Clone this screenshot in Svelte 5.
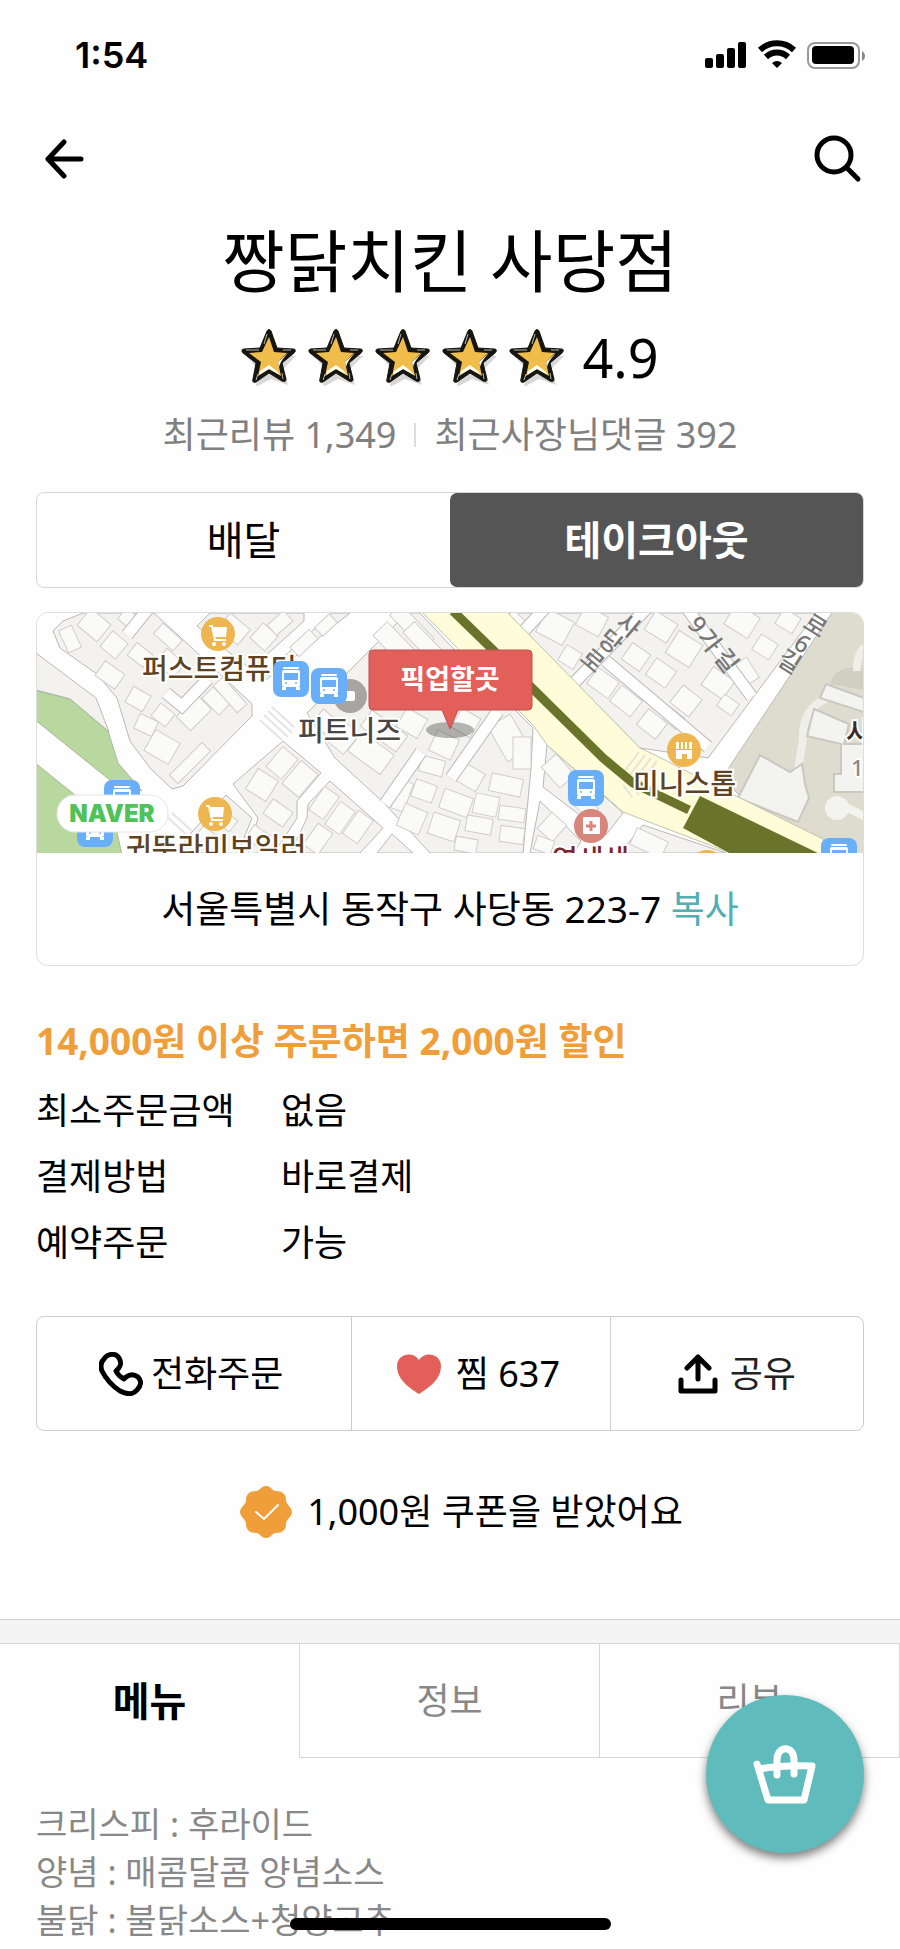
<script lang="ts">
  interface Place {
    x: number;
    y: number;
  }

  const info = [
    { label: '최소주문금액', value: '없음' },
    { label: '결제방법', value: '바로결제' },
    { label: '예약주문', value: '가능' },
  ];

  const tabs = ['메뉴', '정보', '리뷰'];
  const notes = ['크리스피 : 후라이드', '양념 : 매콤달콤 양념소스', '불닭 : 불닭소스+청양고추'];

  let orderType = $state('takeout');
  let activeTab = $state('메뉴');

  const blocks = [
    '0,40 60,85 73,119 34,86 0,77',
    '47,0 27,8 17,18 24,35 61,61 81,85 94,128 114,155 136,176 147,173 216,103 216,91 181,58 119,1 117,0',
    '161,13 174,0 268,0 268,8 215,56 200,45',
    '314,0 296,0 232,58 226,70',
    '371,0 384,0 412,30 497,115 495,155 487,240 394,240 349,191 299,145 271,100',
    '197,171 247,128 285,160 261,188 261,205 250,222 238,240 212,240 222,205',
    '294,168 347,215 324,240 254,240 271,205 272,191',
    '356,221 377,240 341,240',
    '155,220 190,182 216,205 202,240 140,240',
    '471,0 780,0 672,145 604,135',
    '511,132 587,200 570,222 545,203 507,174',
    '504,188 545,228 538,240 494,240',
    '607,212 690,240 584,240',
  ];

  const alleys = [
    '112,-4 91,22',
    '130,80 146,93 172,66',
    '349,191 385,139',
    '415,165 462,98',
    '612,-6 536,72',
    '570,48 672,134',
    '650,-6 716,84',
    '510,-6 486,20',
  ];

  // x, y, width, height, rotation
  const buildings = [
    [58, 12, 26, 22, 40], [78, 32, 20, 20, 40], [34, 26, 14, 24, -25], [93, 6, 18, 14, 40],
    [74, 62, 24, 18, 35], [104, 42, 20, 16, 38], [132, 24, 26, 14, 42], [134, 50, 24, 18, 42],
    [102, 86, 20, 18, 30], [127, 102, 18, 16, 38], [158, 100, 30, 20, -45], [180, 88, 24, 16, 45],
    [194, 82, 36, 13, 48], [110, 112, 20, 16, 25], [126, 134, 28, 24, 30], [154, 150, 46, 12, -45],
    [198, 16, 26, 20, 40], [228, 24, 20, 20, 42], [244, 10, 22, 14, -42], [268, 30, 26, 13, -43],
    [290, 12, 20, 12, -43], [246, 150, 26, 20, -50], [264, 166, 30, 22, -50], [226, 172, 24, 24, 32],
    [242, 200, 24, 18, 35], [222, 224, 20, 16, 35], [288, 190, 28, 18, -55], [304, 205, 28, 18, -55],
    [322, 214, 28, 18, -55], [282, 226, 26, 18, -55], [188, 206, 24, 14, 38], [172, 225, 22, 14, 38],
    [358, 30, 40, 20, 46], [376, 14, 48, 16, 46], [390, 32, 50, 16, 46], [290, 110, 22, 18, 40],
    [308, 125, 20, 26, 40], [335, 140, 40, 24, 36], [348, 118, 44, 20, 36], [376, 110, 24, 22, 30],
    [408, 132, 24, 22, 25], [430, 110, 22, 22, 30], [396, 153, 24, 16, 15], [434, 164, 24, 20, 30],
    [470, 172, 32, 18, 12], [388, 178, 22, 18, 20], [420, 190, 30, 20, 20], [450, 192, 24, 20, 12],
    [476, 201, 26, 14, 8], [364, 182, 18, 30, 20], [376, 206, 24, 24, 24], [408, 214, 28, 22, 18],
    [443, 212, 26, 16, 10], [476, 222, 24, 16, 8], [430, 232, 22, 14, 10], [473, 125, 26, 40, -30],
    [486, 140, 18, 32, 0], [480, 6, 16, 10, 45], [519, 14, 30, 26, 28], [556, 8, 26, 22, 28],
    [534, 44, 18, 18, 32], [567, 70, 26, 20, 35], [590, 88, 26, 20, 38], [616, 111, 24, 20, 38],
    [638, 106, 16, 14, 38], [650, 88, 24, 22, 38], [625, 60, 24, 20, 35], [600, 44, 22, 20, 35],
    [648, 36, 28, 26, 32], [682, 70, 26, 22, 35], [625, 14, 26, 22, 32], [706, 8, 28, 24, 32],
    [729, 34, 20, 18, 32], [711, 58, 14, 24, -32], [692, 92, 18, 14, 35], [752, 8, 20, 18, 32],
    [522, 158, 20, 28, -42], [548, 192, 26, 14, 42], [516, 214, 20, 22, 42], [508, 232, 18, 14, 20],
    [613, 230, 34, 18, 25],
  ];

  const roadLabels = [
    { t: '사', x: 592, y: 13, r: 40 }, { t: '당', x: 574, y: 29, r: 40 }, { t: '로', x: 556, y: 48, r: 40 },
    { t: '9', x: 661, y: 12, r: 52 }, { t: '가', x: 673, y: 28, r: 52 }, { t: '길', x: 690, y: 48, r: 52 },
    { t: '로', x: 779, y: 13, r: 32 }, { t: '6', x: 766, y: 31, r: 32 }, { t: '길', x: 753, y: 49, r: 32 },
  ];

  const buses: Place[] = [
    { x: 255, y: 66 }, { x: 293, y: 73 }, { x: 86, y: 185 },
    { x: 59, y: 216 }, { x: 550, y: 175 }, { x: 803, y: 243 },
  ];
  const carts: Place[] = [{ x: 182, y: 21 }, { x: 179, y: 201 }];
</script>

<svelte:head><title>짱닭치킨 사당점</title></svelte:head>

{#snippet star()}
  <svg class="star" viewBox="0 0 56 58" aria-hidden="true">
    <path d="M30 9l8 17 17 2-13 13 5 16-17-6-15 8 2-18L5 28l18-2z" fill="#000" opacity=".15" />
    <path d="M26 3c1-2 3-2 4 0l6 17 16 1c3 0 3 2 1 4L41 35l4 16c0 3-2 3-4 2l-13-8-13 9c-2 1-4 0-3-3l3-16L2 25c-2-2-1-4 1-4l16-1z" fill="#17150f" stroke="#17150f" />
    <path d="M28 9l5 15 13 1-9 9 3 14-12-7-11 7 3-14L8 25l13-1z" fill="#f0bd4a" />
    <path d="M47 25L37 34l1 5c2-7 5-9 9-14zM28 41l-10 6 1-4 9-6 8 6 3 4z" fill="#fffdf4" />
    <path d="M5 22h13M26 6l-3 10M42 22h8M15 52l2-6M42 51l-1-6" stroke="#b9b7b0" stroke-width="1" fill="none" />
  </svg>
{/snippet}

{#snippet bus(p: Place)}
  <g transform="translate({p.x} {p.y})">
    <rect x="-18" y="-18" width="36" height="36" rx="8" fill="#68aef8" />
    <path d="M-7-11H7" stroke="#fff" stroke-width="2" stroke-linecap="round" />
    <rect x="-9" y="-9" width="18" height="17" rx="2" fill="#fff" />
    <rect x="-7" y="-6" width="14" height="7" fill="#68aef8" />
    <path d="M-9 8h4v3h-4zM5 8h4v3H5z" fill="#fff" />
    <circle cx="-5" cy="4" r="1" fill="#68aef8" /><circle cx="5" cy="4" r="1" fill="#68aef8" />
  </g>
{/snippet}

{#snippet cart(p: Place)}
  <g transform="translate({p.x} {p.y})">
    <circle r="17" fill="#eeb650" />
    <path d="M-9-8h3l3 14h11" fill="none" stroke="#fff" stroke-width="2" />
    <path d="M-5-7H9L8 3H-3z" fill="#fff" />
    <circle cx="-4" cy="10" r="2" fill="#fff" /><circle cx="6" cy="10" r="2" fill="#fff" />
  </g>
{/snippet}

<div class="page">
  <div class="status">
    <span class="time">1:54</span>
    <svg width="162" height="30" viewBox="0 0 162 30" aria-hidden="true">
      <rect x="1" y="18" width="8" height="10" rx="2" />
      <rect x="12" y="14" width="8" height="14" rx="2" />
      <rect x="23" y="8" width="8" height="20" rx="2" />
      <rect x="34" y="2" width="8" height="26" rx="2" />
      <path d="M56 10a25 25 0 0 1 34 0M62 17a16 16 0 0 1 22 0" fill="none" stroke="#000" stroke-width="6" />
      <path d="M73 28l-5-5a8 8 0 0 1 10 0z" />
      <rect x="104" y="3" width="51" height="25" rx="7" fill="none" stroke="#999" stroke-width="2" />
      <rect x="108" y="6" width="42" height="18" rx="4" />
      <path d="M158 11c4 2 4 8 0 10z" fill="#888" />
    </svg>
  </div>

  <nav class="topbar">
    <button class="icon-btn" aria-label="뒤로">
      <svg width="40" height="40" viewBox="0 0 40 40" fill="none" stroke="#000" stroke-width="5" stroke-linecap="round" stroke-linejoin="round">
        <path d="M20 3L4 20l16 17M4 20h33" />
      </svg>
    </button>
    <button class="icon-btn" aria-label="검색">
      <svg width="48" height="48" viewBox="0 0 48 48" fill="none" stroke="#000" stroke-width="5" stroke-linecap="round">
        <circle cx="20" cy="20" r="17" /><path d="M33 33l11 11" />
      </svg>
    </button>
  </nav>

  <header>
    <h1>짱닭치킨 사당점</h1>
    <div class="rating">
      <div class="stars">
        {#each [1, 2, 3, 4, 5] as i (i)}{@render star()}{/each}
      </div>
      <span>4.9</span>
    </div>
    <div class="counts">
      <span>최근리뷰 1,349</span>
      <span class="bar"></span>
      <span>최근사장님댓글 392</span>
    </div>
  </header>

  <main>
    <div class="segment">
      <button class:selected={orderType === 'delivery'} onclick={() => (orderType = 'delivery')}>배달</button>
      <button class:selected={orderType === 'takeout'} onclick={() => (orderType = 'takeout')}>테이크아웃</button>
    </div>

    <section class="map-card">
      <svg class="map" viewBox="0 0 828 240" preserveAspectRatio="xMidYMid slice" role="img" aria-label="픽업할곳 지도">
        <rect width="828" height="240" fill="#fefefe" />
        <g fill="#f3f2ee" stroke="#b9b8b6" stroke-width="1">
          {#each blocks as points}<polygon {points} />{/each}
        </g>
        <g fill="#b9d8a0" stroke="#a9b79d">
          <path d="M-2 77l36 9 38 32 10 32 24 28-31-10L-2 106zM-2 149l82 66 6 27H-2z" />
        </g>
        <g fill="#fafaf9" stroke="#cfceca">
          {#each buildings as [x, y, w, h, r]}
            <rect x={-w / 2} y={-h / 2} width={w} height={h} transform="translate({x} {y}) rotate({r})" />
          {/each}
        </g>
        {#each alleys as points}
          <polyline {points} fill="none" stroke="#b9b8b6" stroke-width="13" />
          <polyline {points} fill="none" stroke="#fefefe" stroke-width="11" />
        {/each}

        <path d="M797-2L686 165l18 18 91 52 33 15V-2z" fill="#dedccf" stroke="#b9b8b6" />
        <path d="M828 55q-28-4-34 16l34 6z" fill="#d1cfc1" />
        <path d="M828 34q-8 10-7 24M790 86q-24 10-23 40l-8 50" fill="none" stroke="#efeee9" stroke-width="8" />
        <g fill="#f3f3f0" stroke="#c9c8c2" stroke-width="2">
          <path d="M724 142l30 17 12-8 3 20 4 14-11 24-60-24z" />
          <path d="M778 96l35 15-5 20h22v48h-32v-18h7v-30l-34-8z" />
          <path d="M790 71l38 14v14l-44-14z" />
          <circle cx="801" cy="195" r="12" stroke="none" />
          <path d="M806 192l24 12" stroke="#f3f3f0" stroke-width="8" />
        </g>

        <path d="M386-1h85l133 136 17 8 43 22 123 61 13 15H697l-110-42-76-67-14-20z" fill="#fefcd9" stroke="#c2c1b0" />
        <path d="M609 142l-18 24M615 145l-18 24M621 148l-18 24M603 139l-18 24M587 172l9 12M594 170l9 12" stroke="#e6e5d6" stroke-width="2" />
        <path d="M417-2l80 78 70 69 30 25 56 27" fill="none" stroke="#69732a" stroke-width="9" />
        <path d="M664 183l122 59h-89l-50-27z" fill="#69732a" />
        <path d="M232 98l24 22M228 102l24 22M224 107l22 20M236 94l22 20M136 200l20 18M131 204l20 18" stroke="#e4e4e8" stroke-width="2" />

        <g class="road-label">
          {#each roadLabels as l}
            <text transform="translate({l.x} {l.y}) rotate({l.r})" y="8">{l.t}</text>
          {/each}
        </g>

        <g class="place-label">
          <text x="106" y="66">퍼스트컴퓨터</text>
          <text x="90" y="245">귀뚜라미보일러</text>
          <text x="597" y="181">미니스톱</text>
          <text x="262" y="128" fill="#484644">피트니즈</text>
          <text x="516" y="257" fill="#7c2430">연세색</text>
          <text x="810" y="130" fill="#3a2a2a">사</text>
          <text x="815" y="163" class="small" fill="#8a8a88">1</text>
        </g>

        <circle cx="314" cy="83" r="17" fill="#a7a4a1" />
        <rect x="307" y="78" width="12" height="10" rx="2" fill="#fff" />
        {#each buses as p}{@render bus(p)}{/each}
        {#each carts as p}{@render cart(p)}{/each}
        <circle cx="671" cy="254" r="17" fill="#eeb650" />
        <g transform="translate(648 137)">
          <circle r="17" fill="#eeb650" />
          <path d="M-8-8h3v7h-3zM-3-8h2v7h-2zM1-8h2v7H1zM5-8h3v7H5zM-8 0H8v9H3V4h-5v5h-6z" fill="#fff" />
        </g>
        <g transform="translate(555 213)">
          <circle r="17" fill="#d8857c" />
          <rect x="-8" y="-9" width="17" height="17" rx="1" fill="#fff" />
          <path d="M0-5V5M-5 0H5" stroke="#d8857c" stroke-width="3" />
        </g>

        <rect x="21" y="182" width="111" height="37" rx="18" fill="#fff" stroke="#e4e4e4" />
        <text class="brand" x="76" y="209">NAVER</text>

        <ellipse cx="414" cy="117" rx="24" ry="8" fill="#000" opacity=".28" />
        <path d="M337 37h155q4 0 4 4v52q0 4-4 4h-70l-8 19-8-19h-69q-4 0-4-4V41q0-4 4-4z" fill="#e25f5a" stroke="#c0524e" />
        <text class="pin-label" x="414" y="76">픽업할곳</text>
      </svg>
      <p class="address">서울특별시 동작구 사당동 223-7 <button>복사</button></p>
    </section>

    <p class="promo">14,000원 이상 주문하면 2,000원 할인</p>
    <dl>
      {#each info as row}
        <div><dt>{row.label}</dt><dd>{row.value}</dd></div>
      {/each}
    </dl>

    <div class="actions">
      <button>
        <svg width="44" height="44" viewBox="0 0 44 44" fill="none" stroke="#000" stroke-width="5" stroke-linejoin="round">
          <path d="M5 7C9 1 17 1 20 6c3 5 2 8-2 12l-1 1c2 4 4 6 8 8l2-2c4-3 8-3 12 0 4 4 3 9-1 13-4 5-11 4-17 1C12 33 7 27 3 19 1 14 2 10 5 7z" />
        </svg>
        전화주문
      </button>
      <button>
        <svg class="heart" width="46" height="42" viewBox="0 0 46 42">
          <path d="M23 41C12 34 1 26 1 13 1 2 16-3 23 7 30-3 45 2 45 13c0 13-11 21-22 28z" fill="#e25f5a" />
        </svg>
        찜 637
      </button>
      <button class="share">
        <svg width="40" height="40" viewBox="0 0 40 40" fill="none" stroke="#000" stroke-width="5" stroke-linecap="round" stroke-linejoin="round">
          <path d="M20 25V4M9 14L20 3l11 11" /><path d="M3 26v11h34V26" />
        </svg>
        공유
      </button>
    </div>

    <p class="coupon">
      <svg width="54" height="54" viewBox="0 0 54 54" aria-hidden="true">
        <path d="M27 1c5 0 6 5 10 5 6 0 10 3 10 9 0 5 6 7 6 12s-6 7-6 12c0 6-4 9-10 9-4 0-5 5-10 5s-6-5-10-5C11 48 7 45 7 39c0-5-6-7-6-12s6-7 6-12c0-6 4-9 10-9 4 0 5-5 10-5z" fill="#f09e3a" />
        <path d="M17 27l8 7 14-14" fill="none" stroke="#fff" stroke-width="2" stroke-linecap="round" />
      </svg>
      1,000원 쿠폰을 받았어요
    </p>
  </main>

  <div class="divider"></div>

  <div class="tabs" role="tablist">
    {#each tabs as tab}
      <button role="tab" aria-selected={activeTab === tab} class:active={activeTab === tab} onclick={() => (activeTab = tab)}>{tab}</button>
    {/each}
  </div>

  <div class="notes">
    {#each notes as line}<p>{line}</p>{/each}
  </div>

  <button class="basket" aria-label="장바구니">
    <svg width="66" height="62" viewBox="0 0 66 62" fill="none" stroke="#fff" stroke-width="7" stroke-linecap="round" stroke-linejoin="round">
      <path d="M5 21l11 36h36l8-34q-28-1-53 3" /><path d="M25 32V17c0-15 17-15 17 0v14" />
    </svg>
  </button>
  <div class="home-indicator"></div>
</div>

<style>
  :global(body) { margin: 0; background: #fefefe; }
  .page {
    font-family: "Noto Sans", "Noto Sans CJK KR", sans-serif;
    font-size: 36px;
    line-height: 48px;
    color: #000;
    overflow: hidden;
  }
  button { font: inherit; color: inherit; background: none; border: none; padding: 0; cursor: pointer; }
  p, h1, dl, dd { margin: 0; }
  svg { flex: none; }

  .status { display: flex; align-items: center; justify-content: space-between; height: 110px; padding: 0 34px 0 75px; }
  .time { font-family: Inter, sans-serif; font-size: 36px; font-weight: 600; }
  .topbar { display: flex; align-items: center; justify-content: space-between; height: 98px; padding: 0 38px 0 44px; }
  .icon-btn { display: flex; }

  header { text-align: center; padding-top: 17px; }
  h1 { font-size: 68px; font-weight: 400; line-height: 72px; }
  .rating { display: flex; align-items: center; justify-content: center; gap: 17px; margin-top: 30px; height: 60px; font-size: 54px; line-height: 60px; }
  .stars { display: flex; gap: 11px; }
  .star { width: 56px; height: 58px; }
  .counts { display: flex; align-items: center; justify-content: center; gap: 18px; margin-top: 24px; color: #808080; }
  .bar { width: 2px; height: 24px; background: #ddd; }

  main { padding: 33px 36px 0; }
  .segment { display: flex; border: 1px solid #d6d6d6; border-radius: 8px; font-size: 40px; }
  .segment button { flex: 1; height: 94px; border-radius: 7px; }
  .segment .selected { background: #555; color: #fff; font-weight: 700; }

  .map-card { margin-top: 24px; border: 1px solid #ddd; border-radius: 12px; overflow: hidden; }
  .map { display: block; width: 100%; height: 240px; }
  .place-label { font-size: 28px; font-weight: 500; fill: #5d4322; }
  .place-label text { paint-order: stroke; stroke: #fff; stroke-width: 4px; }
  .place-label .small { font-size: 22px; }
  .road-label { font-size: 24px; font-weight: 500; text-anchor: middle; fill: #777; }
  .brand { font-family: Inter, sans-serif; font-size: 24px; font-weight: 900; text-anchor: middle; fill: #4fc25a; }
  .pin-label { font-size: 27px; font-weight: 700; text-anchor: middle; fill: #fff; }
  .address { padding: 32px 0; text-align: center; font-size: 37px; }
  .address button { color: #52aeb0; }

  .promo { margin-top: 51px; color: #f09e3a; font-size: 37px; font-weight: 700; }
  dl { display: grid; gap: 18px; margin-top: 22px; }
  dl div { display: grid; grid-template-columns: 245px 1fr; }

  .actions { display: grid; grid-template-columns: 315fr 259fr 254fr; margin-top: 49px; border: 1px solid #ccc; border-radius: 8px; }
  .actions button { display: flex; align-items: center; justify-content: center; gap: 8px; height: 113px; padding-right: 6px; }
  .actions button + button { border-left: 1px solid #ccc; }
  .actions .heart { margin-right: 6px; }
  .actions .share { gap: 12px; padding-right: 0; color: #222; }

  .coupon { display: flex; align-items: center; justify-content: center; gap: 14px; margin-top: 54px; padding: 0 0 80px 22px; }
  .divider { height: 23px; background: #f4f4f4; border-top: 1px solid #ccc; border-bottom: 1px solid #d6d6d6; }

  .tabs { display: grid; grid-template-columns: repeat(3, 1fr); color: #888; }
  .tabs button { height: 114px; border-right: 1px solid #d6d6d6; border-bottom: 1px solid #d6d6d6; }
  .tabs .active { color: #000; font-size: 40px; font-weight: 700; border-bottom-color: transparent; }
  .notes { padding: 42px 36px 0; color: #888; font-size: 34px; }

  .basket {
    position: fixed;
    right: 36px;
    bottom: 96px;
    display: flex;
    align-items: center;
    justify-content: center;
    width: 158px;
    height: 158px;
    border-radius: 50%;
    background: #60bcbc;
    box-shadow: 0 5px 10px rgba(0, 0, 0, 0.5);
  }
  .home-indicator {
    position: fixed;
    left: 50%;
    bottom: 19px;
    width: 321px;
    height: 12px;
    margin-left: -160px;
    border-radius: 6px;
    background: #000;
  }
</style>
